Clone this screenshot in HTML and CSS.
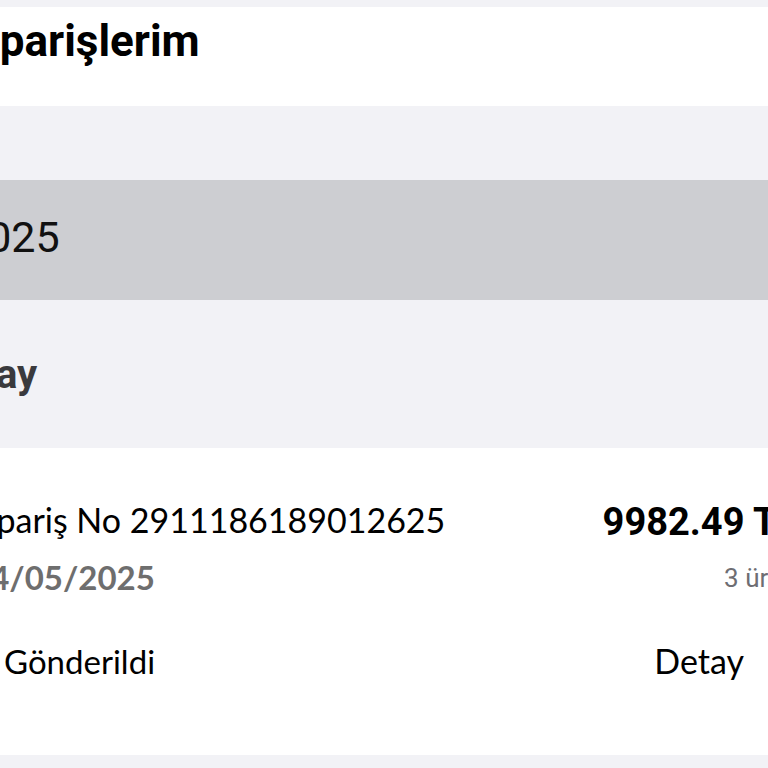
FILE: index.html
```html
<!DOCTYPE html>
<html lang="tr">
<head>
<meta charset="utf-8">
<title>Siparişlerim</title>
<link rel="stylesheet" href="styles.css">
</head>
<body>
<div class="page">
  <div class="strip"></div>
  <header class="header">
    <h1 class="title">Siparişlerim</h1>
  </header>
  <div class="band-light"></div>
  <div class="band-dark">
    <span class="year">2025</span>
  </div>
  <div class="band-filter">
    <span class="filter">3 ay</span>
  </div>
  <section class="card">
    <div class="order-head">
      <div class="order-left">
        <div class="order-no">Sipariş No 2911186189012625</div>
        <div class="order-date">24/05/2025</div>
      </div>
      <div class="order-right">
        <div class="price">9982.49 TL</div>
        <div class="count">3 ürün</div>
      </div>
    </div>
    <div class="order-foot">
      <span class="status">Gönderildi</span>
      <span class="detail">Detay</span>
    </div>
  </section>
  <div class="strip-bottom"></div>
</div>
</body>
</html>
```
FILE: styles.css
```css
html, body {
  margin: 0;
  padding: 0;
  background: #f2f2f6;
  overflow: hidden;
}

.page {
  margin-left: -37px;
  width: 841px;
  font-family: "Lato", "Noto Sans", sans-serif;
  color: #000;
}

.strip {
  height: 7px;
  background: #f2f2f6;
}

.header {
  height: 99px;
  background: #fff;
  box-sizing: border-box;
  padding-top: 12px;
}

.title {
  margin: 0 0 0 -2px;
  font-family: "Roboto", "Liberation Sans", sans-serif;
  font-weight: 700;
  font-size: 44px;
  line-height: 44px;
}

.band-light {
  height: 74px;
  background: #f2f2f6;
}

.band-dark {
  height: 120px;
  box-sizing: border-box;
  background: #cdced2;
  padding-top: 32px;
}

.year {
  display: block;
  font-family: "Roboto", "Liberation Sans", sans-serif;
  font-weight: 400;
  font-size: 43px;
  line-height: 50px;
  color: #111;
}

.band-filter {
  height: 148px;
  box-sizing: border-box;
  background: #f2f2f6;
  padding-top: 52px;
}

.filter {
  display: block;
  font-family: "Roboto", "Liberation Sans", sans-serif;
  font-weight: 700;
  font-size: 40px;
  line-height: 45.6px;
  color: #3a3a3d;
}

.card {
  background: #fff;
  height: 307px;
  box-sizing: border-box;
  padding: 52px 7px 0 7px;
}

.order-head {
  display: flex;
  justify-content: space-between;
  align-items: flex-start;
}

.order-no {
  font-size: 34px;
  line-height: 40.8px;
}

.order-date {
  margin-top: 16px;
  margin-left: 1px;
  font-size: 33px;
  line-height: 40.8px;
  font-weight: 700;
  color: #6e6e6e;
}

.order-right {
  display: flex;
  flex-direction: column;
  align-items: flex-end;
}

.price {
  font-family: "Roboto", "Liberation Sans", sans-serif;
  font-weight: 700;
  font-size: 38px;
  line-height: 45.6px;
}

.count {
  margin-top: 17px;
  font-family: "Roboto", "Liberation Sans", sans-serif;
  font-size: 26px;
  line-height: 30px;
  color: #6e6e73;
}

.order-foot {
  margin-top: 43px;
  display: flex;
  justify-content: space-between;
  align-items: baseline;
}

.status {
  font-size: 33px;
  line-height: 40.8px;
  padding-left: 34px;
}

.detail {
  font-size: 34px;
  line-height: 40.8px;
  margin-right: 53px;
}

.strip-bottom {
  height: 20px;
  background: #f2f2f6;
}
```
